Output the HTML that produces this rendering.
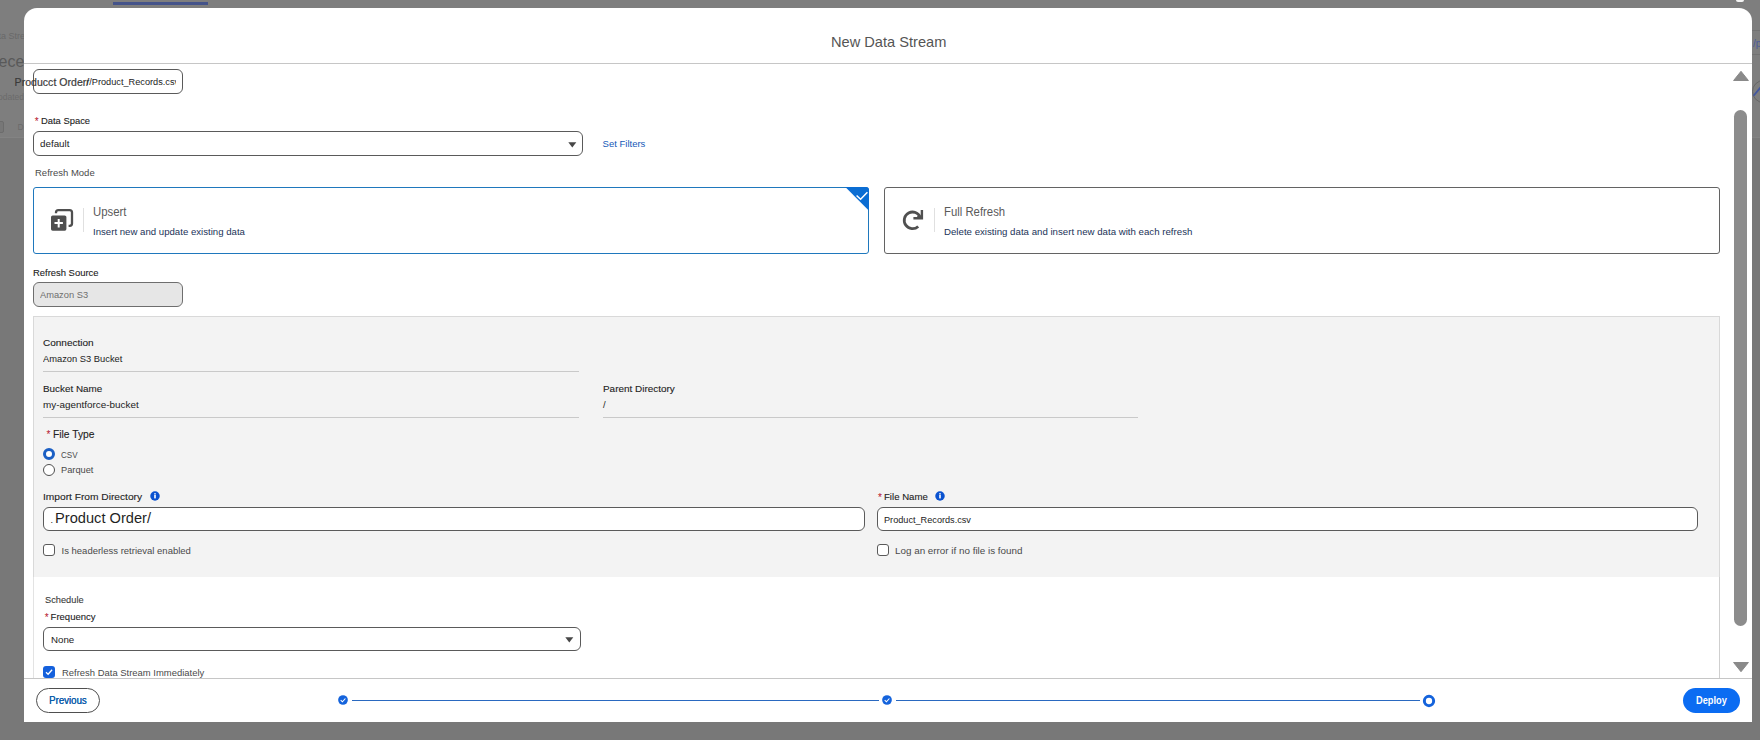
<!DOCTYPE html>
<html>
<head>
<meta charset="utf-8">
<title>New Data Stream</title>
<style>
*{box-sizing:border-box;margin:0;padding:0}
html,body{width:1760px;height:740px;overflow:hidden}
body{background:#787878;font-family:"Liberation Sans",sans-serif;font-size:10px;color:#222;position:relative}
.abs{position:absolute}
.t{position:absolute;white-space:pre}
.req{position:absolute;color:#b5122a;font-size:10px;line-height:12px}
.inp{position:absolute;background:#fff;border:1px solid #5a5a5a;border-radius:6px}
.hr{position:absolute;height:1px;background:#c9c9c9}
.cb{position:absolute;width:12px;height:12px;border:1px solid #5a5a5a;border-radius:3px;background:#fff}
.bgt{position:absolute;white-space:nowrap}
</style>
</head>
<body>
<!-- background remnants behind backdrop -->
<div class="abs" style="left:0;top:0;width:1760px;height:138px;background:#7e7e7e"></div>
<div class="abs" style="left:0;top:137px;width:1760px;height:1px;background:#838383"></div>
<div class="abs" style="left:113px;top:1.5px;width:95px;height:3.5px;background:#44538a"></div>
<div class="abs" style="left:1736px;top:0;width:8px;height:1.5px;background:#f4f4f4;border-radius:0 0 2px 2px"></div>
<div class="bgt" style="left:-1.5px;top:30px;font-size:9px;line-height:12px;color:#696969">ta Stre</div>
<div class="bgt" style="left:-1.5px;top:52px;font-size:16px;line-height:19px;color:#595959">ece</div>
<div class="bgt" style="left:-2px;top:91px;font-size:8.5px;line-height:12px;color:#6b6b6b">odated</div>
<div class="abs" style="left:-6px;top:121px;width:10px;height:12px;border:1px solid #6c6c6c;border-radius:2px;background:#777"></div>
<div class="bgt" style="left:17.6px;top:120.5px;font-size:8.5px;line-height:12px;color:#6b6b6b">D</div>
<div class="abs" style="left:1752px;top:30px;width:8px;height:1px;background:#727272"></div>
<div class="abs" style="left:1752px;top:54px;width:8px;height:1px;background:#727272"></div>
<div class="bgt" style="left:1753px;top:37.5px;font-size:10px;line-height:12px;color:#4a5a99">/p</div>
<div class="abs" style="left:1752.3px;top:79.5px;width:26px;height:23.5px;border:1px solid #666;border-radius:12px"></div>
<svg class="abs" style="left:1752px;top:84px" width="8" height="14"><path d="M1.6 11.8L8.5 3.4" stroke="#4357a0" stroke-width="1.8"/></svg>

<!-- modal -->
<div class="abs" id="modal" style="left:24px;top:8px;width:1728px;height:714px;background:#fff;border-radius:13px 13px 0 0"></div>
<div class="hr" style="left:24px;top:63px;width:1728px;background:#c6c6c6"></div>

<!-- content container side borders -->
<div class="abs" style="left:1719px;top:316px;width:1px;height:362px;background:#cfcfcf"></div>
<div class="abs" style="left:33px;top:577px;width:1px;height:101px;background:#e3e3e3"></div>

<!-- first input -->
<div class="inp" style="left:33px;top:69px;width:150px;height:25px"></div>
<div class="t" style="left:86.2px;top:75.5px;font-size:9.2px;line-height:12px;color:#222;width:90px;overflow:hidden">r/Product_Records.csv</div>
<div class="t" style="left:14.6px;top:75.6px;font-size:10.5px;line-height:13px;color:#3a3a3a;letter-spacing:0.04px;-webkit-text-stroke:0.2px">Producct Order/</div>

<!-- data space -->
<div class="req" style="left:34.8px;top:115.5px">*</div>
<div class="inp" style="left:33px;top:131px;width:550px;height:25px"></div>
<svg class="abs" style="left:568px;top:141.6px" width="9" height="6"><path d="M0.3 0.3H8.3L4.3 5.4Z" fill="#474747"/></svg>

<!-- cards -->
<div class="abs" id="card1" style="left:33px;top:187px;width:836px;height:67px;border:1px solid #1f78bd;border-radius:3px;background:#fff"></div>
<svg class="abs" style="left:845px;top:187px" width="24" height="24"><path d="M0.3 0H21Q24 0 24 3V23.7Z" fill="#0b6dd3"/><path d="M11.6 8.5L15.6 12.3L22.4 5.3" stroke="#fff" stroke-width="1.5" fill="none"/></svg>
<div class="abs" id="card2" style="left:884px;top:187px;width:836px;height:67px;border:1px solid #636363;border-radius:3px;background:#fff"></div>

<!-- upsert icon -->
<svg class="abs" style="left:50px;top:208px" width="24" height="24" viewBox="0 0 24 24"><path d="M6 5.2V4.5Q6 2.1 8.4 2.1H19.6Q22 2.1 22 4.5V15.6Q22 17.9 19.8 17.9H18.6" fill="none" stroke="#4f4f4f" stroke-width="2.3"/><rect x="1" y="7.4" width="15.4" height="15.4" rx="1.7" fill="#4f4f4f"/><path d="M8.7 10.9V19.4M4.5 15.1H12.9" stroke="#fff" stroke-width="2"/></svg>
<div class="abs" style="left:83px;top:208px;width:1px;height:24px;background:#e0e0e0"></div>
<!-- refresh icon -->
<svg class="abs" style="left:901px;top:208px" width="24" height="24" viewBox="0 0 24 24"><path d="M19.3 9.4A8.3 8.3 0 1 0 17.2 18.4" fill="none" stroke="#505050" stroke-width="2.8"/><path d="M20.9 2V10.2H12.4" fill="none" stroke="#505050" stroke-width="2.4"/><path d="M17.2 6.2L20.9 10.2H15.5Z" fill="#505050"/></svg>
<div class="abs" style="left:934px;top:208px;width:1px;height:24px;background:#e0e0e0"></div>

<!-- refresh source -->
<div class="inp" style="left:33px;top:282px;width:150px;height:25px;background:#e6e6e6;border-color:#6e6e6e"></div>

<!-- gray section -->
<div class="abs" id="gray" style="left:33px;top:316px;width:1687px;height:261px;background:#f3f3f3;border:1px solid #d9d9d9;border-bottom:none"></div>
<div class="hr" style="left:43px;top:371px;width:536px"></div>
<div class="hr" style="left:43px;top:417px;width:536px"></div>
<div class="hr" style="left:603px;top:417px;width:535px"></div>

<div class="req" style="left:46.5px;top:429px">*</div>
<div class="abs" style="left:43px;top:448px;width:12px;height:12px;border-radius:50%;border:3px solid #1b5fc4;background:#fff"></div>
<div class="abs" style="left:43px;top:464px;width:12px;height:12px;border-radius:50%;border:1px solid #4f4f4f;background:#fff"></div>

<svg class="abs" style="left:150.4px;top:491.1px" width="10" height="10" viewBox="0 0 10 10"><circle cx="5" cy="5" r="4.75" fill="#0a52d0"/><rect x="4.2" y="4" width="1.6" height="3.4" fill="#fff"/><rect x="4.2" y="2.2" width="1.6" height="1.3" fill="#fff"/></svg>
<div class="inp" style="left:43px;top:507px;width:822px;height:24px"></div>
<div class="cb" style="left:43px;top:544px"></div>

<div class="req" style="left:878px;top:492px">*</div>
<svg class="abs" style="left:935.3px;top:491.1px" width="10" height="10" viewBox="0 0 10 10"><circle cx="5" cy="5" r="4.75" fill="#0a52d0"/><rect x="4.2" y="4" width="1.6" height="3.4" fill="#fff"/><rect x="4.2" y="2.2" width="1.6" height="1.3" fill="#fff"/></svg>
<div class="inp" style="left:877px;top:507px;width:821px;height:24px"></div>
<div class="cb" style="left:877px;top:544px"></div>

<!-- schedule -->
<div class="req" style="left:44.7px;top:612px">*</div>
<div class="inp" style="left:43px;top:627px;width:538px;height:24px"></div>
<svg class="abs" style="left:564.5px;top:637.2px" width="9" height="6"><path d="M0.3 0.3H8.3L4.3 5.4Z" fill="#474747"/></svg>
<div class="abs" style="left:43px;top:666px;width:12px;height:12px;border-radius:3px;background:#1460dc"></div>
<svg class="abs" style="left:43px;top:666px" width="12" height="12"><path d="M3 6.3L5.1 8.3L9.1 3.8" stroke="#fff" stroke-width="1.3" fill="none"/></svg>

<div class="t" style="left:830.50px;top:33px;font-size:15px;line-height:18px;color:#555;letter-spacing:0.000px;transform:scaleX(0.975);transform-origin:-1.00px 0;">New Data Stream</div>
<div class="t" style="left:40.60px;top:115px;font-size:9.5px;line-height:12px;color:#222;letter-spacing:0.000px;-webkit-text-stroke:0.1px;transform:scaleX(0.989);transform-origin:0.00px 0;">Data Space</div>
<div class="t" style="left:40.25px;top:138px;font-size:9.5px;line-height:12px;color:#222;letter-spacing:0.000px;transform:scaleX(1.032);transform-origin:0.00px 0;">default</div>
<div class="t" style="left:602.60px;top:138px;font-size:9.5px;line-height:12px;color:#1459b8;letter-spacing:0.000px;">Set Filters</div>
<div class="t" style="left:35.00px;top:167px;font-size:9.5px;line-height:12px;color:#4a4a4a;letter-spacing:0.000px;">Refresh Mode</div>
<div class="t" style="left:93.40px;top:205px;font-size:12px;line-height:15px;color:#5a5a5a;letter-spacing:0.000px;transform:scaleX(0.947);transform-origin:0.00px 0;">Upsert</div>
<div class="t" style="left:93.40px;top:226px;font-size:9.5px;line-height:12px;color:#1b3358;letter-spacing:0.000px;transform:scaleX(1.013);transform-origin:0.00px 0;">Insert new and update existing data</div>
<div class="t" style="left:944.30px;top:205px;font-size:12px;line-height:15px;color:#5a5a5a;letter-spacing:0.000px;transform:scaleX(0.945);transform-origin:0.00px 0;">Full Refresh</div>
<div class="t" style="left:944.30px;top:226px;font-size:9.5px;line-height:12px;color:#1b3358;letter-spacing:0.000px;transform:scaleX(1.018);transform-origin:0.00px 0;">Delete existing data and insert new data with each refresh</div>
<div class="t" style="left:33.40px;top:267px;font-size:9.5px;line-height:12px;color:#222;letter-spacing:0.000px;-webkit-text-stroke:0.1px;transform:scaleX(0.992);transform-origin:0.00px 0;">Refresh Source</div>
<div class="t" style="left:40.30px;top:289px;font-size:9.5px;line-height:12px;color:#6e6e6e;letter-spacing:0.000px;transform:scaleX(0.979);transform-origin:0.00px 0;">Amazon S3</div>
<div class="t" style="left:43.10px;top:337px;font-size:9.5px;line-height:12px;color:#222;letter-spacing:0.000px;-webkit-text-stroke:0.1px;transform:scaleX(1.053);transform-origin:0.00px 0;">Connection</div>
<div class="t" style="left:43.10px;top:353px;font-size:9.5px;line-height:12px;color:#222;letter-spacing:0.000px;transform:scaleX(0.982);transform-origin:0.00px 0;">Amazon S3 Bucket</div>
<div class="t" style="left:43.10px;top:383px;font-size:9.5px;line-height:12px;color:#222;letter-spacing:0.000px;-webkit-text-stroke:0.1px;transform:scaleX(1.038);transform-origin:0.00px 0;">Bucket Name</div>
<div class="t" style="left:43.10px;top:399px;font-size:9.5px;line-height:12px;color:#222;letter-spacing:0.000px;transform:scaleX(1.041);transform-origin:0.00px 0;">my-agentforce-bucket</div>
<div class="t" style="left:603.00px;top:383px;font-size:9.5px;line-height:12px;color:#222;letter-spacing:0.000px;-webkit-text-stroke:0.1px;transform:scaleX(1.045);transform-origin:0.00px 0;">Parent Directory</div>
<div class="t" style="left:603.00px;top:399px;font-size:9.5px;line-height:12px;color:#222;letter-spacing:0.000px;">/</div>
<div class="t" style="left:52.50px;top:427px;font-size:11px;line-height:14px;color:#222;letter-spacing:0.000px;-webkit-text-stroke:0.1px;transform:scaleX(0.935);transform-origin:0.00px 0;">File Type</div>
<div class="t" style="left:61.30px;top:449px;font-size:9.5px;line-height:12px;color:#4a4a4a;letter-spacing:0.000px;transform:scaleX(0.847);transform-origin:0.00px 0;">CSV</div>
<div class="t" style="left:61.30px;top:464px;font-size:9.5px;line-height:12px;color:#4a4a4a;letter-spacing:0.000px;transform:scaleX(0.975);transform-origin:0.00px 0;">Parquet</div>
<div class="t" style="left:43.10px;top:491px;font-size:9.5px;line-height:12px;color:#222;letter-spacing:0.000px;-webkit-text-stroke:0.1px;transform:scaleX(1.073);transform-origin:0.00px 0;">Import From Directory</div>
<div class="t" style="left:50.60px;top:515px;font-size:9px;line-height:11px;color:#222;letter-spacing:0.000px;">.</div>
<div class="t" style="left:55.00px;top:510px;font-size:14px;line-height:17px;color:#1f1f1f;letter-spacing:0.000px;transform:scaleX(1.045);transform-origin:-1.00px 0;">Product Order/</div>
<div class="t" style="left:61.50px;top:545px;font-size:9.5px;line-height:12px;color:#4a4a4a;letter-spacing:0.000px;">Is headerless retrieval enabled</div>
<div class="t" style="left:884.40px;top:491px;font-size:9.5px;line-height:12px;color:#222;letter-spacing:0.000px;-webkit-text-stroke:0.1px;transform:scaleX(1.012);transform-origin:0.00px 0;">File Name</div>
<div class="t" style="left:883.80px;top:514px;font-size:9.5px;line-height:12px;color:#222;letter-spacing:0.000px;transform:scaleX(0.963);transform-origin:0.00px 0;">Product_Records.csv</div>
<div class="t" style="left:895.00px;top:545px;font-size:9.5px;line-height:12px;color:#4a4a4a;letter-spacing:0.000px;transform:scaleX(1.036);transform-origin:0.00px 0;">Log an error if no file is found</div>
<div class="t" style="left:44.60px;top:594px;font-size:9.5px;line-height:12px;color:#3a3a3a;letter-spacing:0.000px;-webkit-text-stroke:0.1px;transform:scaleX(0.974);transform-origin:0.00px 0;">Schedule</div>
<div class="t" style="left:50.60px;top:611px;font-size:9.5px;line-height:12px;color:#222;letter-spacing:0.000px;-webkit-text-stroke:0.1px;">Frequency</div>
<div class="t" style="left:50.60px;top:634px;font-size:9.5px;line-height:12px;color:#222;letter-spacing:0.000px;transform:scaleX(1.021);transform-origin:0.00px 0;">None</div>
<div class="t" style="left:61.50px;top:667px;font-size:9.5px;line-height:12px;color:#4a4a4a;letter-spacing:0.000px;transform:scaleX(0.994);transform-origin:0.00px 0;">Refresh Data Stream Immediately</div>

<!-- footer -->
<div class="abs" style="left:24px;top:678px;width:1728px;height:44px;background:#fff;border-top:1px solid #c6c6c6"></div>
<div class="abs" style="left:36px;top:688px;width:64px;height:25px;border:1px solid #4f4f4f;border-radius:13px;background:#fff"></div>

<div class="abs" style="left:352px;top:700px;width:527px;height:1px;background:#2a69c0"></div>
<div class="abs" style="left:896px;top:700px;width:524px;height:1px;background:#2a69c0"></div>
<svg class="abs" style="left:338.1px;top:695.4px" width="10" height="10"><circle cx="5" cy="5" r="4.85" fill="#1463dc"/><path d="M2.7 5.2L4.4 6.8L7.4 3.5" stroke="#fff" stroke-width="1.1" fill="none"/></svg>
<svg class="abs" style="left:882.4px;top:695px" width="10" height="10"><circle cx="5" cy="5" r="4.85" fill="#1463dc"/><path d="M2.7 5.2L4.4 6.8L7.4 3.5" stroke="#fff" stroke-width="1.1" fill="none"/></svg>
<svg class="abs" style="left:1422.1px;top:694px" width="14" height="14"><circle cx="7" cy="7" r="4.65" fill="#fff" stroke="#1463dc" stroke-width="3"/></svg>

<div class="abs" style="left:1683px;top:688px;width:57px;height:25px;border-radius:13px;background:#0b6cf2"></div>
<div class="t" style="left:49.40px;top:695px;font-size:10px;line-height:12px;color:#0b5cab;letter-spacing:0.000px;text-shadow:0.35px 0 0 #0b5cab;transform:scaleX(0.966);transform-origin:0.00px 0;">Previous</div>
<div class="t" style="left:1696.00px;top:695px;font-size:10px;line-height:12px;color:#fff;letter-spacing:0.000px;font-weight:bold;transform:scaleX(0.924);transform-origin:0.00px 0;">Deploy</div>

<!-- scrollbar -->
<svg class="abs" style="left:1731.5px;top:70.3px" width="18" height="12"><path d="M9 1.3L16.4 10.5H1.6Z" fill="#8a8a8a" stroke="#8a8a8a" stroke-width="1" stroke-linejoin="round"/></svg>
<div class="abs" style="left:1734px;top:110px;width:13px;height:515.5px;border-radius:6.5px;background:#8c8c8c"></div>
<svg class="abs" style="left:1731.5px;top:661px" width="18" height="12"><path d="M9 10.7L16.4 1.5H1.6Z" fill="#8a8a8a" stroke="#8a8a8a" stroke-width="1" stroke-linejoin="round"/></svg>
</body>
</html>
